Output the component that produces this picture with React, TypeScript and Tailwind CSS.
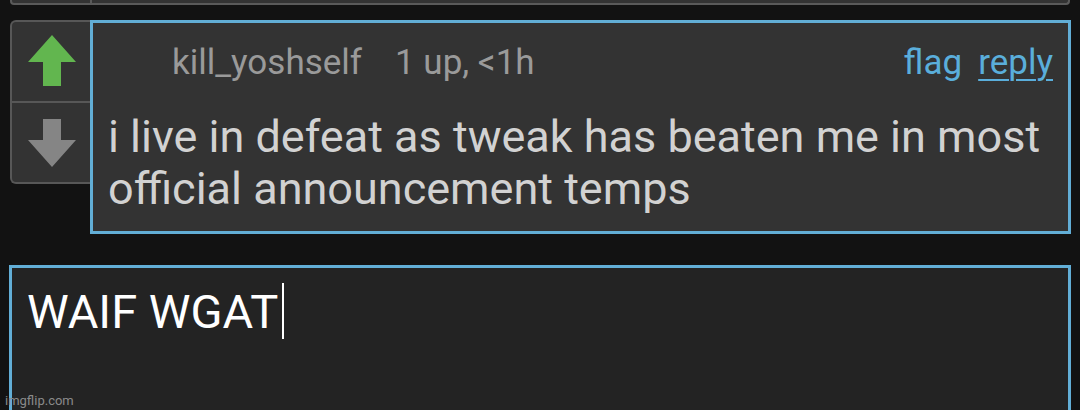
import React from "react";

const BLUE = "#62aed6";

const UpArrow = () => (
  <svg width="48" height="52" viewBox="0 0 48 52">
    <polygon points="24,0 48,27 33,27 33,51 15,51 15,27 0,27" fill="#62b64f" />
  </svg>
);

const DownArrow = () => (
  <svg width="48" height="48" viewBox="0 0 48 48">
    <polygon points="15,0 33,0 33,21 48,21 24,48 0,21 15,21" fill="#858585" />
  </svg>
);

const VoteBox = () => (
  <div className="w-[80px] h-[164px] shrink-0 flex flex-col border-2 border-r-0 border-[#575757] rounded-l-[6px] bg-[#333]">
    <div className="h-[81px] flex items-start justify-center pt-[13px] pl-[2px] border-b-2 border-[#575757]">
      <UpArrow />
    </div>
    <div className="flex-1 flex items-start justify-center pt-[16px] pl-[2px]">
      <DownArrow />
    </div>
  </div>
);

const CommentCard = () => (
  <div
    className="w-[981px] h-[214px] shrink-0 border-[3px] bg-[#333] flex flex-col"
    style={{ borderColor: BLUE }}
  >
    <div className="flex items-start h-[88px] pl-[79px] pr-[15px] pt-[22px] text-[35px] leading-none">
      <span className="text-[#9a9a9a]">kill_yoshself</span>
      <span className="ml-[33px] text-[#9a9a9a]">1 up, &lt;1h</span>
      <span className="ml-auto text-[#5aaedb]">flag</span>
      <span className="ml-[16px] text-[#5aaedb] underline underline-offset-[5px] decoration-2">reply</span>
    </div>
    <p className="pl-[15px] pr-[15px] text-[45px] leading-[52px] text-[#d2d2d2]">
      i live in defeat as tweak has beaten me in most official announcement temps
    </p>
  </div>
);

export default function App() {
  return (
    <div
      className="relative w-[1080px] h-[410px] overflow-hidden bg-[#121212]"
      style={{ fontFamily: "Roboto, 'Noto Sans', sans-serif" }}
    >
      <div className="mx-[10px] h-[5px] flex border-x-2 border-b-2 border-[#5a5a5a] rounded-b-[4px] bg-[#333]">
        <div className="w-[80px] border-r-2 border-[#5a5a5a]" />
      </div>

      <div className="flex pl-[10px] mt-[15px]">
        <VoteBox />
        <CommentCard />
      </div>

      <div
        className="ml-[9px] mt-[31px] w-[1062px] h-[160px] border-[3px] bg-[#232323] px-[15px] pt-[15px]"
        style={{ borderColor: BLUE }}
      >
        <div className="flex items-center h-[56px] text-[47px] leading-none text-white">
          <span>WAIF WGAT</span>
          <span className="ml-[4px] w-[2px] h-[56px] bg-white" />
        </div>
      </div>

      <span className="absolute left-[5px] bottom-[3px] text-[13px] leading-none text-[#8a8a8a]">imgflip.com</span>
    </div>
  );
}
